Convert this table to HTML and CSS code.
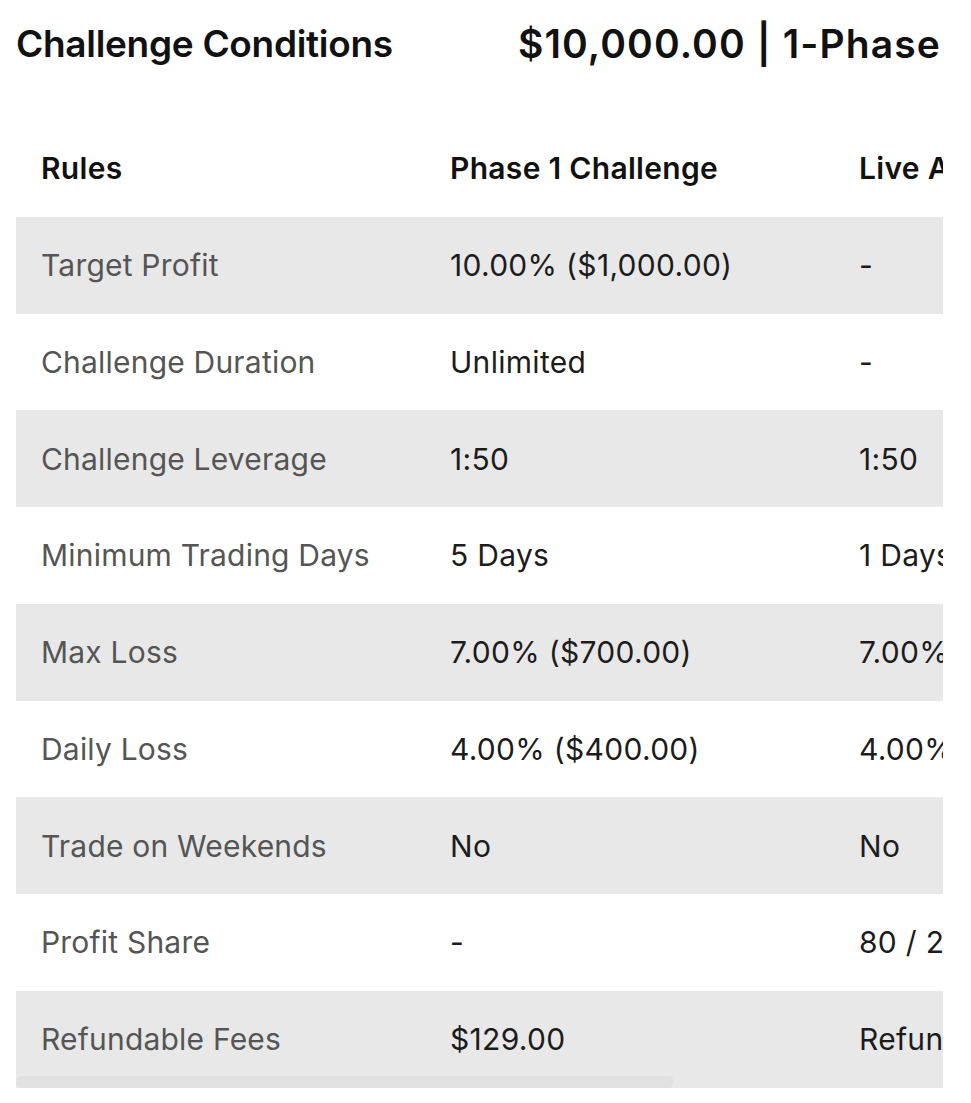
FILE: index.html
```html
<!DOCTYPE html>
<html lang="en">
<head>
<meta charset="utf-8">
<title>Challenge Conditions</title>
<link rel="stylesheet" href="styles.css">
</head>
<body>
<div class="page">
  <div class="title-row">
    <h1 class="title">Challenge Conditions</h1>
    <h2 class="plan">$10,000.00 | 1-Phase</h2>
  </div>
  <div class="table-wrap">
    <div class="table">
      <div class="row head">
        <div class="cell">Rules</div>
        <div class="cell">Phase 1 Challenge</div>
        <div class="cell">Live Account</div>
      </div>
      <div class="row alt">
        <div class="cell rule">Target Profit</div>
        <div class="cell">10.00% ($1,000.00)</div>
        <div class="cell">-</div>
      </div>
      <div class="row">
        <div class="cell rule">Challenge Duration</div>
        <div class="cell">Unlimited</div>
        <div class="cell">-</div>
      </div>
      <div class="row alt">
        <div class="cell rule">Challenge Leverage</div>
        <div class="cell">1:50</div>
        <div class="cell">1:50</div>
      </div>
      <div class="row">
        <div class="cell rule">Minimum Trading Days</div>
        <div class="cell">5 Days</div>
        <div class="cell">1 Days</div>
      </div>
      <div class="row alt">
        <div class="cell rule">Max Loss</div>
        <div class="cell">7.00% ($700.00)</div>
        <div class="cell">7.00% ($700.00)</div>
      </div>
      <div class="row">
        <div class="cell rule">Daily Loss</div>
        <div class="cell">4.00% ($400.00)</div>
        <div class="cell">4.00% ($400.00)</div>
      </div>
      <div class="row alt">
        <div class="cell rule">Trade on Weekends</div>
        <div class="cell">No</div>
        <div class="cell">No</div>
      </div>
      <div class="row">
        <div class="cell rule">Profit Share</div>
        <div class="cell">-</div>
        <div class="cell">80 / 20</div>
      </div>
      <div class="row alt">
        <div class="cell rule">Refundable Fees</div>
        <div class="cell">$129.00</div>
        <div class="cell">Refundable</div>
      </div>
    </div>
    <div class="scroll-thumb"></div>
  </div>
</div>
</body>
</html>
```

FILE: styles.css
```css
* { box-sizing: border-box; }

html, body {
  margin: 0;
  padding: 0;
  background: #ffffff;
}

body {
  font-family: Inter, "Liberation Sans", sans-serif;
  color: #1c1c1c;
}

.page {
  width: 927px;
  margin-left: 16px;
}

.title-row {
  display: flex;
  align-items: center;
  height: 86px;
  overflow: hidden;
  white-space: nowrap;
}

.title {
  margin: 0;
  width: 502px;
  flex: none;
  font-size: 37px;
  font-weight: 600;
  letter-spacing: -0.3px;
  color: #111;
}

.plan {
  margin: 0;
  font-size: 39px;
  font-weight: 600;
  letter-spacing: 1.1px;
  color: #111;
}

.table-wrap {
  position: relative;
  margin-top: 34px;
  width: 927px;
  overflow: hidden;
}

.table {
  width: 1305px;
}

.row {
  display: grid;
  grid-template-columns: 409px 409px 487px;
  height: 96.75px;
  align-items: center;
}

.row.alt {
  background: #e8e8e8;
}

.cell {
  padding-left: 25px;
  font-size: 30px;
  font-weight: 400;
  white-space: nowrap;
  letter-spacing: 0.3px;
  color: #1c1c1c;
}

.cell.rule {
  color: #555555;
  letter-spacing: 0.2px;
}

.head .cell {
  font-weight: 600;
  letter-spacing: 0.3px;
  color: #111;
}

.scroll-thumb {
  position: absolute;
  left: 0;
  bottom: 0;
  width: 658px;
  height: 12px;
  border-radius: 6px;
  background: #e1e1e1;
}
```
